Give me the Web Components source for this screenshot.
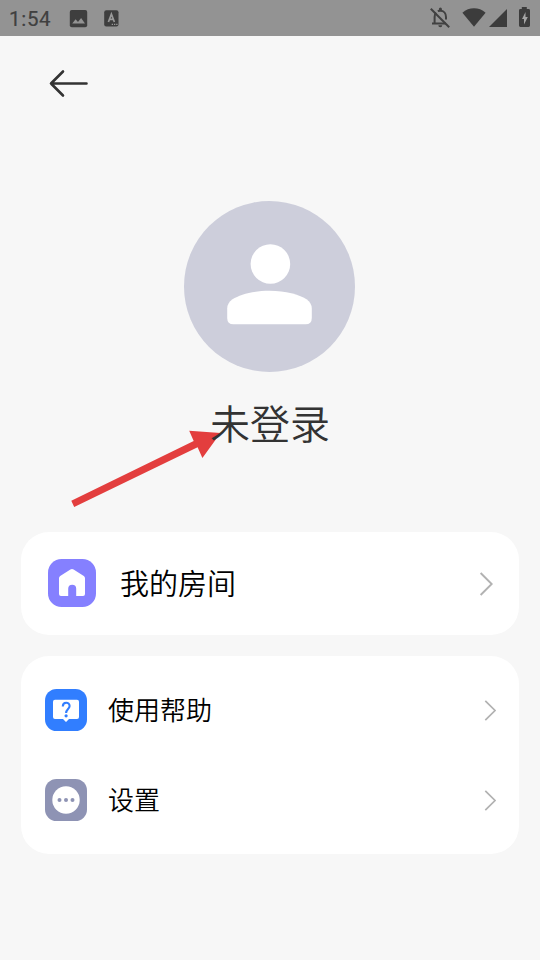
<!DOCTYPE html>
<html lang="zh-CN">
<head>
<meta charset="utf-8">
<title>未登录</title>
<style>
html, body { margin: 0; height: 100%; background: #f7f7f7; overflow: hidden; }
body { font-family: "Noto Sans CJK SC", sans-serif; font-weight: 350; }
</style>
</head>
<body>
<profile-page></profile-page>

<template id="t-status">
<style>
:host { display: flex; height: 36px; align-items: flex-start; justify-content: space-between; background: #939393; color: #404040; font-family: Roboto, sans-serif; font-weight: 400; }
.left { display: flex; }
.time { width: 60px; box-sizing: border-box; padding-left: 9px; font-size: 20.5px; letter-spacing: .7px; line-height: 38px; -webkit-text-stroke: .2px #404040; white-space: nowrap; }
svg { display: block; }
</style>
<div class="left">
  <span class="time">1:54</span>
  <svg width="75" height="36" viewBox="60 0 75 36">
    <rect x="69.8" y="9.9" width="17.4" height="17.3" rx="2" fill="#3e3e3e"/>
    <path d="M72.2 23.6 75.6 19.2 78 22 81.1 18 85 23.6Z" fill="#939393"/>
    <rect x="104.2" y="10.2" width="14.3" height="16.3" rx="2" fill="#3e3e3e"/>
    <path d="M108.4 22 111.4 14.2 114.4 22M109.4 19.4H113.4" fill="none" stroke="#999" stroke-width="1.7"/>
    <path d="M111.7 24.4h1.3M114 24.4h1.3M116.2 24.4h1.3" stroke="#999" stroke-width="1.2"/>
  </svg>
</div>
<svg width="120" height="36" viewBox="420 0 120 36">
  <g fill="none" stroke="#414141" stroke-width="2">
    <path d="M430.8 8.8 449.2 27.2"/>
    <path d="M432 23.6H446M434.6 23.5V17Q434.6 14.4 436 12.7M437.8 11.2Q438.8 10.7 440.3 10.7C444 10.7 446 13.6 446 17V19.6"/>
  </g>
  <path d="M438.9 10.5V9a1.5 1.5 0 0 1 3 0v1.5ZM438.3 25.2h4a2 2 0 0 1-4 0Z" fill="#414141"/>
  <path d="M462.4 12.7C469 6.8 479 6.8 485.6 12.7L474 26.7Z" fill="#3c3c3c"/>
  <path d="M507 9V27H489Z" fill="#3c3c3c"/>
  <path d="M521.8 9V7h5v2h1.8q1.4 0 1.4 1.4v15.2q0 1.4-1.4 1.4h-8.2q-1.4 0-1.4-1.4V10.4q0-1.4 1.4-1.4Z" fill="#3c3c3c"/>
  <path d="M525.5 12 522 19h2v5.4l3.8-7.3h-2.3Z" fill="#a4a4a4"/>
</svg>
</template>

<template id="t-nav">
<style>
:host { display: block; padding: 29px 0 0 45px; height: 36px; }
svg { display: block; }
</style>
<svg width="50" height="36" viewBox="45 65 50 36" fill="none" stroke="#333" stroke-width="2.6" stroke-linecap="round" stroke-linejoin="round"><path d="M86.5 83.5H51M63 71.5 51 83.5 63 95.5"/></svg>
</template>

<template id="t-user">
<style>
:host { display: flex; flex-direction: column; align-items: center; position: relative; padding-top: 100px; height: 331px; box-sizing: border-box; }
.avatar { display: block; width: 171px; height: 171px; margin-right: 1px; flex: none; }
.name { font-size: 40px; line-height: 60px; margin-top: 20px; color: #333; position: relative; z-index: 1; }
.pointer { position: absolute; left: 60px; top: 319px; }
</style>
<svg class="avatar" viewBox="184 201 171 171">
  <circle cx="269.5" cy="286.5" r="85.5" fill="#cdcedb"/>
  <circle cx="270.4" cy="264" r="19.8" fill="#fff"/>
  <path d="M227.2 308.5Q227.2 303 232.5 299.3C240 294.5 253 290.8 269.5 290.8S299 294.5 306.5 299.3Q311.8 303 311.8 308.5V318Q311.8 324.3 305.5 324.3H233.5Q227.2 324.3 227.2 318Z" fill="#fff"/>
</svg>
<span class="name"><slot></slot></span>
<svg class="pointer" width="170" height="95" viewBox="60 420 170 95"><path d="M71.3 500.7 193.7 440.9 189.2 430.8 220.5 432.9 202.4 458 197.6 447.3 74.2 507.1Z" fill="#e33e3e"/></svg>
</template>

<template id="t-card">
<style>
:host { display: flex; flex-direction: column; background: #fff; border-radius: 28px; margin: 0 21px 21px; }
:host([grouped]) { padding: 9px 0; }
</style>
<slot></slot>
</template>

<template id="t-row">
<style>
:host { display: flex; align-items: center; height: 90px; padding: 0 23px 0 24px; font-size: 26px; color: #000; }
:host([large]) { height: 102px; padding: 0 26px 0 27px; font-size: 29px; }
.label { flex: 1; margin-left: 21px; line-height: 44px; padding-bottom: 2px; }
:host([large]) .label { margin-left: 24px; }
.arrow { display: block; width: 12px; height: 21px; }
:host([large]) .arrow { width: 14px; height: 24px; position: relative; top: .5px; }
</style>
<slot name="icon"></slot>
<span class="label"><slot></slot></span>
<svg class="arrow" viewBox="0 0 12 21" fill="none" stroke="#b2b2b2" stroke-width="1.7"><path d="M1.3 .9 11 10.5 1.3 20.1"/></svg>
</template>

<template id="t-icon">
<style>
:host { display: block; flex: none; width: 42px; height: 42px; }
:host([name="home"]) { width: 48px; height: 48px; }
svg { display: none; width: 100%; height: 100%; }
:host([name="home"]) .home, :host([name="help"]) .help, :host([name="more"]) .more { display: block; }
</style>
<svg class="home" viewBox="48 559 48 48">
  <rect x="48" y="559" width="48" height="48" rx="13.5" fill="#8580ff"/>
  <path d="M59 578.2Q59 576.8 60.2 575.9L70.4 569.4Q72 568.4 73.6 569.4L83.8 575.9Q85 576.8 85 578.2V594Q85 596 83 596H76.2V588.8Q76.2 584.8 72.2 584.8T68.2 588.8V596H61Q59 596 59 594Z" fill="#fff"/>
</svg>
<svg class="help" viewBox="45 689 42 42">
  <rect x="45" y="689" width="42" height="42" rx="11.5" fill="#317eff"/>
  <path d="M55 699.7H77Q79 699.7 79 701.7V717Q79 719 77 719H69L66 722 63 719H55Q53 719 53 717V701.7Q53 699.7 55 699.7Z" fill="#fff"/>
  <path d="M62.8 706.4C62.8 701.6 69.6 701.6 69.6 706C69.6 709 66.1 709 66.1 713" fill="none" stroke="#317eff" stroke-width="2.1"/>
  <circle cx="66.1" cy="715.8" r="1.6" fill="#317eff"/>
</svg>
<svg class="more" viewBox="45 779 42 42">
  <rect x="45" y="779" width="42" height="42" rx="11.5" fill="#8e93b4"/>
  <circle cx="66" cy="800" r="13.7" fill="#fff"/>
  <g fill="#8e93b4"><circle cx="59.5" cy="800" r="2"/><circle cx="66" cy="800" r="2"/><circle cx="72.5" cy="800" r="2"/></g>
</svg>
</template>

<template id="t-page">
<style>:host { display: flex; flex-direction: column; height: 960px; width: 540px; background: #f7f7f7; }
page-nav { flex: none; } status-bar { flex: none; } user-panel { flex: none; margin-bottom: 100px; }
menu-card { flex: none; }
menu-row[large] { margin-bottom: 1px; box-sizing: border-box; }</style>
<status-bar></status-bar>
<page-nav></page-nav>
<user-panel>未登录</user-panel>
<menu-card><menu-row large><app-icon slot="icon" name="home"></app-icon>我的房间</menu-row></menu-card>
<menu-card grouped>
  <menu-row><app-icon slot="icon" name="help"></app-icon>使用帮助</menu-row>
  <menu-row><app-icon slot="icon" name="more"></app-icon>设置</menu-row>
</menu-card>
</template>

<script>
const define = (name, id) => customElements.define(name, class extends HTMLElement {
  constructor() {
    super();
    this.attachShadow({ mode: "open" }).append(document.getElementById(id).content.cloneNode(true));
  }
});
define("status-bar", "t-status");
define("page-nav", "t-nav");
define("user-panel", "t-user");
define("menu-card", "t-card");
define("menu-row", "t-row");
define("app-icon", "t-icon");
define("profile-page", "t-page");
</script>
</body>
</html>
